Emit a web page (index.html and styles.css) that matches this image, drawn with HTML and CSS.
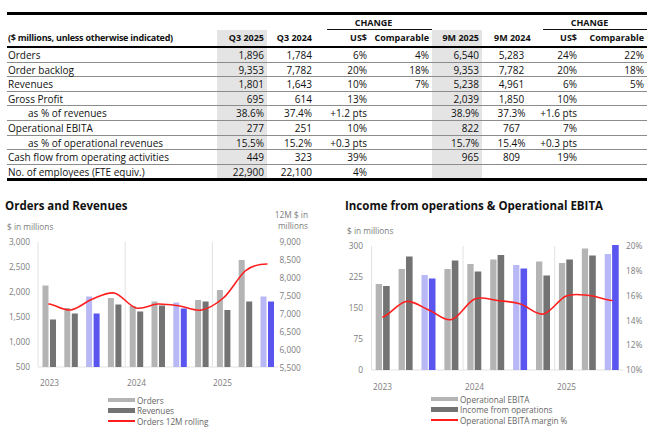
FILE: index.html
```html
<!DOCTYPE html>
<html>
<head>
<meta charset="utf-8">
<link rel="stylesheet" href="styles.css">
</head>
<body>
<div class="page">
  <table class="kpi">
    <colgroup>
      <col class="c-label"><col class="c-q25"><col class="c-q24"><col class="c-us"><col class="c-comp">
      <col class="c-m25"><col class="c-m24"><col class="c-us2"><col class="c-comp2">
    </colgroup>
    <thead>
      <tr class="hrow1">
        <th></th><th></th><th></th>
        <th colspan="2"><span class="change">CHANGE</span></th>
        <th></th><th></th>
        <th colspan="2"><span class="change change2">CHANGE</span></th>
      </tr>
      <tr class="hrow2">
        <th class="label">($ millions, unless otherwise indicated)</th>
        <th class="shade">Q3 2025</th>
        <th>Q3 2024</th>
        <th>US$</th>
        <th>Comparable</th>
        <th class="shade">9M 2025</th>
        <th class="center">9M 2024</th>
        <th>US$</th>
        <th>Comparable</th>
      </tr>
    </thead>
    <tbody>
      <tr><td class="label">Orders</td><td class="shade">1,896</td><td>1,784</td><td>6%</td><td>4%</td><td class="shade">6,540</td><td class="center">5,283</td><td>24%</td><td>22%</td></tr>
      <tr><td class="label">Order backlog</td><td class="shade">9,353</td><td>7,782</td><td>20%</td><td>18%</td><td class="shade">9,353</td><td class="center">7,782</td><td>20%</td><td>18%</td></tr>
      <tr><td class="label">Revenues</td><td class="shade">1,801</td><td>1,643</td><td>10%</td><td>7%</td><td class="shade">5,238</td><td class="center">4,961</td><td>6%</td><td>5%</td></tr>
      <tr><td class="label">Gross Profit</td><td class="shade">695</td><td>614</td><td>13%</td><td></td><td class="shade">2,039</td><td class="center">1,850</td><td>10%</td><td></td></tr>
      <tr><td class="label sub">as % of revenues</td><td class="shade">38.6%</td><td>37.4%</td><td>+1.2 pts</td><td></td><td class="shade">38.9%</td><td class="center">37.3%</td><td>+1.6 pts</td><td></td></tr>
      <tr><td class="label">Operational EBITA</td><td class="shade">277</td><td>251</td><td>10%</td><td></td><td class="shade">822</td><td class="center">767</td><td>7%</td><td></td></tr>
      <tr><td class="label sub">as % of operational revenues</td><td class="shade">15.5%</td><td>15.2%</td><td>+0.3 pts</td><td></td><td class="shade">15.7%</td><td class="center">15.4%</td><td>+0.3 pts</td><td></td></tr>
      <tr><td class="label">Cash flow from operating activities</td><td class="shade">449</td><td>323</td><td>39%</td><td></td><td class="shade">965</td><td class="center">809</td><td>19%</td><td></td></tr>
      <tr><td class="label">No. of employees (FTE equiv.)</td><td class="shade">22,900</td><td>22,100</td><td>4%</td><td></td><td class="shade"></td><td class="center"></td><td></td><td></td></tr>
    </tbody>
  </table>

  <div class="charts">
    <section class="chart chart-left">
      <h2 class="chart-title">Orders and Revenues</h2>
      <svg class="plot" width="330" height="180" viewBox="0 213 330 180">
        <g class="grid">
          <line x1="38" y1="243" x2="38" y2="368"/>
          <line x1="125.2" y1="243" x2="125.2" y2="368"/>
          <line x1="212.4" y1="243" x2="212.4" y2="368"/>
          <line x1="38" y1="368" x2="277.8" y2="368"/>
        </g>
        <g class="axis-label">
          <text x="7" y="231">$ in millions</text>
          <text x="308" y="218.5" text-anchor="end">12M $ in</text>
          <text x="308" y="229.5" text-anchor="end">millions</text>
          <g text-anchor="end">
            <text x="30" y="246">3,000</text>
            <text x="30" y="271">2,500</text>
            <text x="30" y="296">2,000</text>
            <text x="30" y="321">1,500</text>
            <text x="30" y="346">1,000</text>
            <text x="30" y="371">500</text>
          </g>
          <text x="279.5" y="246">9,000</text>
          <text x="279.5" y="264">8,500</text>
          <text x="279.5" y="282">8,000</text>
          <text x="279.5" y="300">7,500</text>
          <text x="279.5" y="318">7,000</text>
          <text x="279.5" y="336">6,500</text>
          <text x="279.5" y="354">6,000</text>
          <text x="279.5" y="372">5,500</text>
          <text x="40" y="387">2023</text>
          <text x="127" y="387">2024</text>
          <text x="213" y="387">2025</text>
        </g>
        <g class="bar-a">
          <rect x="42.5" y="286.5" width="6" height="81.5"/>
          <rect x="64.3" y="309" width="6" height="59"/>
          <rect x="107.9" y="299" width="6" height="69"/>
          <rect x="129.7" y="307" width="6" height="61"/>
          <rect x="151.5" y="302.5" width="6" height="65.5"/>
          <rect x="195.1" y="301" width="6" height="67"/>
          <rect x="216.9" y="291" width="6" height="77"/>
          <rect x="238.7" y="261" width="6" height="107"/>
        </g>
        <g class="bar-b">
          <rect x="50" y="320.5" width="6" height="47.5"/>
          <rect x="71.8" y="314.5" width="6" height="53.5"/>
          <rect x="115.4" y="305.5" width="6" height="62.5"/>
          <rect x="137.2" y="312.5" width="6" height="55.5"/>
          <rect x="159" y="306.5" width="6" height="61.5"/>
          <rect x="202.6" y="302.5" width="6" height="65.5"/>
          <rect x="224.4" y="311" width="6" height="57"/>
          <rect x="246.2" y="302.5" width="6" height="65.5"/>
        </g>
        <g class="bar-hl-a">
          <rect x="86.1" y="297.5" width="6" height="70.5"/>
          <rect x="173.3" y="303.5" width="6" height="64.5"/>
          <rect x="260.5" y="297.5" width="6" height="70.5"/>
        </g>
        <g class="bar-hl-b">
          <rect x="93.6" y="314.5" width="6" height="53.5"/>
          <rect x="180.8" y="309.5" width="6" height="58.5"/>
          <rect x="268" y="302.5" width="6" height="65.5"/>
        </g>
        <path class="trend" d="M48.9,305 C56.2,306 63.4,311.8 70.7,311 C78,310.2 85.2,302.8 92.5,300 C99.8,297.2 107,293 114.3,294 C121.6,295.5 128.8,307.2 136.1,309 C143.4,310.8 150.6,305.3 157.9,305 C165.2,304.7 172.4,306 179.7,307 C187,308 194.2,312.3 201.5,311 C208.8,309.7 216,305.2 223.3,299 C230.6,292.8 237.8,278.7 245.1,272 C252.4,266 259.6,265 266.9,265"/>
      </svg>
      <ul class="legend">
        <li><span class="swatch sw-a"></span>Orders</li>
        <li><span class="swatch sw-b"></span>Revenues</li>
        <li><span class="swatch sw-line"></span>Orders 12M rolling</li>
      </ul>
    </section>

    <section class="chart chart-right">
      <h2 class="chart-title">Income from operations &amp; Operational EBITA</h2>
      <svg class="plot" width="332" height="180" viewBox="331 213 332 180">
        <g class="grid">
          <line x1="371.5" y1="247" x2="371.5" y2="371"/>
          <line x1="463.1" y1="247" x2="463.1" y2="371"/>
          <line x1="554.7" y1="247" x2="554.7" y2="371"/>
          <line x1="371.5" y1="371" x2="623.4" y2="371"/>
        </g>
        <g class="axis-label">
          <text x="347" y="234.5">$ in millions</text>
          <g text-anchor="end">
            <text x="363" y="250">300</text>
            <text x="363" y="281">225</text>
            <text x="363" y="312">150</text>
            <text x="363" y="343">75</text>
            <text x="363" y="374">0</text>
          </g>
          <text x="626" y="250">20%</text>
          <text x="626" y="275">18%</text>
          <text x="626" y="300">16%</text>
          <text x="626" y="324.5">14%</text>
          <text x="626" y="349">12%</text>
          <text x="626" y="374">10%</text>
          <text x="373" y="391">2023</text>
          <text x="465" y="391">2024</text>
          <text x="557" y="391">2025</text>
        </g>
        <g class="bar-a">
          <rect x="375.7" y="285" width="6.3" height="86"/>
          <rect x="398.6" y="270" width="6.3" height="101"/>
          <rect x="444.4" y="270" width="6.3" height="101"/>
          <rect x="467.3" y="265" width="6.3" height="106"/>
          <rect x="490.2" y="260.5" width="6.3" height="110.5"/>
          <rect x="536" y="262.5" width="6.3" height="108.5"/>
          <rect x="558.9" y="264" width="6.3" height="107"/>
          <rect x="581.8" y="249.5" width="6.3" height="121.5"/>
        </g>
        <g class="bar-b">
          <rect x="383.1" y="287" width="6.6" height="84"/>
          <rect x="406" y="257.5" width="6.6" height="113.5"/>
          <rect x="451.8" y="261.5" width="6.6" height="109.5"/>
          <rect x="474.7" y="272.5" width="6.6" height="98.5"/>
          <rect x="497.6" y="256" width="6.6" height="115"/>
          <rect x="543.4" y="276.5" width="6.6" height="94.5"/>
          <rect x="566.3" y="260.5" width="6.6" height="110.5"/>
          <rect x="589.2" y="256.5" width="6.6" height="114.5"/>
        </g>
        <g class="bar-hl-a">
          <rect x="421.5" y="276" width="6.3" height="95"/>
          <rect x="513.1" y="266" width="6.3" height="105"/>
          <rect x="604.7" y="255" width="6.3" height="116"/>
        </g>
        <g class="bar-hl-b">
          <rect x="428.9" y="279.5" width="6.6" height="91.5"/>
          <rect x="520.5" y="269.5" width="6.6" height="101.5"/>
          <rect x="612.1" y="246" width="6.6" height="125"/>
        </g>
        <path class="trend" d="M383,318 C390.6,315.4 398.3,303.7 405.9,302.5 C413.5,301.3 421.2,308 428.8,311 C436.4,314 444.1,322.3 451.7,320.5 C459.3,318.7 467,303.2 474.6,300 C482.2,296.8 489.9,300.7 497.5,301.5 C505.1,302.3 512.8,302.8 520.4,305 C528,307.2 535.7,316.3 543.3,315 C550.9,313.7 558.6,300.1 566.2,297 C573.8,293.9 581.5,295.8 589.1,296.5 C596.7,297.3 604.4,300.7 612,301.5"/>
      </svg>
      <ul class="legend">
        <li><span class="swatch sw-a"></span>Operational EBITA</li>
        <li><span class="swatch sw-b"></span>Income from operations</li>
        <li><span class="swatch sw-line"></span>Operational EBITA margin %</li>
      </ul>
    </section>
  </div>
</div>
</body>
</html>
```

FILE: styles.css
```css
* { box-sizing: border-box; }

html, body {
  margin: 0;
  padding: 0;
  background: #fff;
}

body {
  width: 663px;
  height: 436px;
  overflow: hidden;
  font-family: "Open Sans", "Noto Sans", sans-serif;
  color: #111;
}

.page {
  padding-top: 12px;
}

/* ---------- KPI table ---------- */
.kpi {
  margin-left: 7px;
  width: 640px;
  table-layout: fixed;
  border-collapse: separate;
  border-spacing: 0;
  border-top: 3px solid #000;
  border-bottom: 3px solid #000;
}

.c-label { width: 210px; }
.c-q25 { width: 50px; }
.c-q24 { width: 48px; }
.c-us { width: 55px; }
.c-comp { width: 62px; }
.c-m25 { width: 50px; }
.c-m24 { width: 50px; }
.c-us2 { width: 48px; }
.c-comp2 { width: 67px; }

.kpi th {
  font-size: 9px;
  font-weight: 700;
  text-align: right;
  padding: 0 3px 0 0;
  white-space: nowrap;
}

.hrow1 th {
  height: 15px;
  vertical-align: bottom;
  padding: 0;
}

.change {
  display: block;
  margin-left: 12px;
  padding-right: 12px;
  text-align: center;
  line-height: 13px;
  border-bottom: 1.5px solid #111;
}

.change2 {
  margin-left: 11px;
  padding-right: 11px;
}

.hrow2 th {
  height: 18px;
  line-height: 16px;
  border-bottom: 2px solid #000;
}

.kpi .label {
  text-align: left;
  padding-left: 1px;
}

.hrow2 th.label {
  letter-spacing: -0.25px;
}

.kpi td {
  font-size: 10px;
  height: 14.6px;
  line-height: 11.6px;
  padding: 2px 3px 0 0;
  text-align: right;
  white-space: nowrap;
  border-bottom: 1px solid #8c8c8c;
}

.kpi tbody tr:last-child td {
  border-bottom: none;
  height: 13.6px;
}

.kpi td.sub {
  padding-left: 21px;
}

.kpi .shade {
  background: #e4e4e4;
}

.kpi .center {
  text-align: center;
  padding-left: 12px;
}

/* ---------- Charts ---------- */
.charts {
  display: grid;
  grid-template-columns: 331px 332px;
  margin-top: 18px;
}

.chart-title {
  margin: 0;
  font-size: 11.5px;
  line-height: 13px;
  font-weight: 700;
  color: #111;
  white-space: nowrap;
}

.chart-left .chart-title { padding-left: 5px; }
.chart-right .chart-title { padding-left: 14px; }

.plot {
  display: block;
  overflow: visible;
}

.grid line {
  stroke: #e2e2e2;
  stroke-width: 1;
}

.axis-label text {
  font-family: "Open Sans", "Noto Sans", sans-serif;
  font-size: 8.3px;
  fill: #7d7d7d;
}

.bar-a rect { fill: #b4b4b4; }
.bar-b rect { fill: #737373; }
.bar-hl-a rect { fill: #b9b8f6; }
.bar-hl-b rect { fill: #5b55ef; }

.trend {
  fill: none;
  stroke: #ff1e1e;
  stroke-width: 1.6;
  stroke-linecap: round;
}

.legend {
  list-style: none;
  margin: 0;
  padding: 2.5px 0 0 108px;
  display: flex;
  flex-direction: column;
}

.chart-right .legend {
  padding: 1.5px 0 0 100px;
}

.legend li {
  display: flex;
  align-items: center;
  gap: 2px;
  height: 10.5px;
  font-size: 8.2px;
  color: #666;
  white-space: nowrap;
}

.swatch {
  display: block;
  width: 27px;
  flex: none;
}

.sw-a { height: 4.5px; background: #b4b4b4; }
.sw-b { height: 4.5px; background: #737373; }
.sw-line { height: 2px; background: #ff1e1e; }
```
